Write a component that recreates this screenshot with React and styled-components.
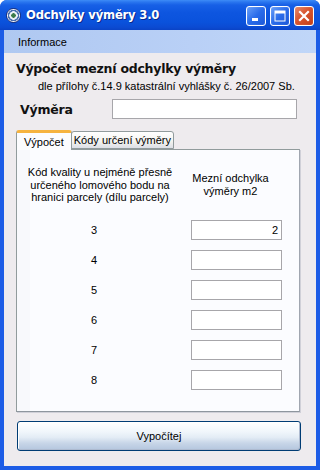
import React from "react";
import styled, { createGlobalStyle } from "styled-components";

const Global = createGlobalStyle`
  html, body { margin: 0; padding: 0; background: #ffffff; }
  body { width: 320px; height: 470px; overflow: hidden; }
  * { box-sizing: border-box; }
`;

const Window = styled.div`
  width: 320px;
  height: 470px;
  display: flex;
  flex-direction: column;
  border-radius: 7px 7px 0 0;
  overflow: hidden;
  background: #0b46d6;
  font-family: "Liberation Sans", Arial, sans-serif;
`;

const TitleBar = styled.div`
  height: 30px;
  flex: none;
  display: flex;
  align-items: center;
  padding: 0 6px 0 6px;
  background: linear-gradient(
    180deg,
    #3d8cf7 0px,
    #2a76ef 2px,
    #1760e6 5px,
    #0e56e0 12px,
    #0a52dc 22px,
    #0b4bd3 27px,
    #0a43c6 30px
  );
`;

const AppIcon = styled.div`
  width: 15px;
  height: 15px;
  border-radius: 50%;
  background: radial-gradient(circle at 50% 50%, #3c7a4a 0 2px, #e9eef5 2.5px 4px, #4a6fb0 4.5px 5.5px, #f4f6fa 6px);
  border: 1px solid #1b2f78;
  flex: none;
`;

const Title = styled.div`
  margin-left: 5px;
  color: #ffffff;
  font-family: "DejaVu Sans", sans-serif;
  font-weight: bold;
  font-size: 11.6px;
  letter-spacing: -0.2px;
  text-shadow: 1px 1px 0 #0a2a8c;
  flex: 1;
  white-space: nowrap;
`;

const Buttons = styled.div`
  display: flex;
  gap: 4px;
  padding-top: 2px;
`;

const CapButton = styled.div`
  width: 20px;
  height: 20px;
  border-radius: 3px;
  border: 1px solid #ffffff;
  display: flex;
  align-items: center;
  justify-content: center;
  background: ${(p) =>
    p.$close
      ? "linear-gradient(135deg, #e58a6c 0%, #d8552f 45%, #c23e18 100%)"
      : "linear-gradient(135deg, #6aa0f8 0%, #2a6cea 50%, #1c58d8 100%)"};
  box-shadow: inset 0 0 1px rgba(255,255,255,0.5);
`;

const Frame = styled.div`
  flex: 1;
  display: flex;
  flex-direction: column;
  border-left: 4px solid #1c5ce6;
  border-right: 4px solid #1c5ce6;
  border-bottom: 4px solid #1c5ce6;
  box-shadow: inset 1px 0 0 #4a8af5, inset -1px 0 0 #4a8af5, inset 0 -1px 0 #4a8af5;
  background: #eceaed;
`;

const MenuBar = styled.div`
  height: 23px;
  flex: none;
  display: flex;
  align-items: center;
  padding-left: 14px;
  font-size: 11px;
  color: #000;
  background: linear-gradient(90deg, #afc8f1 0%, #b9d0f6 60%, #c0d6f8 100%);
`;

const Client = styled.div`
  flex: 1;
  display: flex;
  flex-direction: column;
  padding: 8px 12px 0 12px;
  background: #eeebee;
`;

const Heading = styled.div`
  font-family: "DejaVu Sans", sans-serif;
  font-weight: bold;
  font-size: 12.5px;
  letter-spacing: -0.25px;
  color: #111;
  line-height: 16px;
`;

const Sub = styled.div`
  margin-top: 2px;
  padding-left: 22px;
  font-size: 11px;
  line-height: 14px;
  color: #000;
`;

const AreaRow = styled.div`
  margin-top: 6px;
  display: flex;
  align-items: center;
  height: 20px;
`;

const AreaLabel = styled.div`
  width: 96px;
  padding-left: 4px;
  font-family: "DejaVu Sans", sans-serif;
  font-weight: bold;
  font-size: 12.5px;
  letter-spacing: -0.2px;
  color: #111;
`;

const Input = styled.div`
  width: ${(p) => p.$w}px;
  height: 20px;
  background: #ffffff;
  border: 1px solid #a7a6aa;
  font-size: 11px;
  display: flex;
  align-items: center;
  justify-content: flex-end;
  padding-right: 3px;
  color: #000;
`;

const Tabs = styled.div`
  margin-top: 11px;
  display: flex;
  align-items: flex-end;
  height: 19px;
  position: relative;
  z-index: 1;
`;

const Tab = styled.div`
  height: ${(p) => (p.$active ? 20 : 18)}px;
  padding: 0 ${(p) => (p.$active ? 7 : 2)}px;
  margin-bottom: ${(p) => (p.$active ? -1 : 0)}px;
  display: flex;
  align-items: center;
  font-size: 11px;
  color: #000;
  white-space: nowrap;
  border: 1px solid #919b9c;
  border-bottom: ${(p) => (p.$active ? "none" : "1px solid #919b9c")};
  border-top: ${(p) => (p.$active ? "3px solid #f6b33f" : "1px solid #919b9c")};
  border-radius: 3px 3px 0 0;
  background: ${(p) =>
    p.$active ? "#fcfcfe" : "linear-gradient(180deg, #ffffff 0%, #f3f3ef 60%, #dcdfe6 100%)"};
  margin-left: ${(p) => (p.$active ? 0 : -1)}px;
`;

const Panel = styled.div`
  width: 284px;
  height: 263px;
  border: 1px solid #919b9c;
  border-right-color: #a0a6b0;
  border-bottom-color: #8e969e;
  background: #f8f9fc;
  box-shadow: 1px 1px 0 #d0d0d8;
  padding: 0 0 0 13px;
`;

const Inner = styled.div`
  width: 269px;
  height: 100%;
  background: #fbfcff;
  display: grid;
  grid-template-columns: 157px 112px;
  grid-template-rows: 70px repeat(6, 30px);
  align-items: start;
`;

const Head = styled.div`
  display: flex;
  flex-direction: column;
  align-items: center;
  white-space: nowrap;
  font-size: 11px;
  line-height: 12.5px;
  color: #000;
  padding-top: ${(p) => p.$top}px;
  padding-right: ${(p) => p.$right}px;
`;

const Code = styled.div`
  height: 20px;
  display: flex;
  align-items: center;
  padding-left: 61px;
  font-size: 11px;
  color: #000;
`;

const Cell = styled.div`
  padding-left: 4px;
`;

const Footer = styled.div`
  padding-top: 9px;
`;

const CalcButton = styled.div`
  width: 284px;
  height: 30px;
  margin-left: 1px;
  border: 1px solid #003c74;
  border-radius: 3px;
  display: flex;
  align-items: center;
  justify-content: center;
  font-size: 11px;
  color: #000;
  background: linear-gradient(
    180deg,
    #ffffff 0%,
    #f0f6fb 35%,
    #e3ecf5 55%,
    #c8d6e8 75%,
    #b4c6de 100%
  );
  box-shadow: inset 1px 1px 0 #ffffff, inset -1px -1px 0 #aebbd0;
`;

const rows = [
  { code: "3", value: "2" },
  { code: "4", value: "" },
  { code: "5", value: "" },
  { code: "6", value: "" },
  { code: "7", value: "" },
  { code: "8", value: "" },
];

export default function App() {
  return (
    <>
      <Global />
      <Window>
        <TitleBar>
          <AppIcon />
          <Title>Odchylky výměry 3.0</Title>
          <Buttons>
            <CapButton>
              <svg width="12" height="12" viewBox="0 0 12 12">
                <rect x="2" y="8" width="6" height="3" fill="#fff" />
              </svg>
            </CapButton>
            <CapButton>
              <svg width="12" height="12" viewBox="0 0 12 12">
                <rect x="1" y="1" width="10" height="10" fill="none" stroke="#fff" strokeWidth="1" />
                <rect x="1" y="1" width="10" height="2.5" fill="#fff" />
              </svg>
            </CapButton>
            <CapButton $close>
              <svg width="12" height="12" viewBox="0 0 12 12">
                <path d="M2 2 L10 10 M10 2 L2 10" stroke="#fff" strokeWidth="2.2" strokeLinecap="square" />
              </svg>
            </CapButton>
          </Buttons>
        </TitleBar>
        <Frame>
          <MenuBar>Informace</MenuBar>
          <Client>
            <Heading>Výpočet mezní odchylky výměry</Heading>
            <Sub>dle přílohy č.14.9 katastrální vyhlášky č. 26/2007 Sb.</Sub>
            <AreaRow>
              <AreaLabel>Výměra</AreaLabel>
              <Input $w={185} />
            </AreaRow>
            <Tabs>
              <Tab $active>Výpočet</Tab>
              <Tab>Kódy určení výměry</Tab>
            </Tabs>
            <Panel>
              <Inner>
                <Head $top={16} $right={17}>
                  <span>Kód kvality u nejméně přesně</span>
                  <span>určeného lomového bodu na</span>
                  <span>hranici parcely (dílu parcely)</span>
                </Head>
                <Head $top={22} $right={25}>
                  <span>Mezní odchylka</span>
                  <span>výměry m2</span>
                </Head>
                {rows.map((r) => (
                  <React.Fragment key={r.code}>
                    <Code>{r.code}</Code>
                    <Cell>
                      <Input $w={91}>{r.value}</Input>
                    </Cell>
                  </React.Fragment>
                ))}
              </Inner>
            </Panel>
            <Footer>
              <CalcButton>Vypočítej</CalcButton>
            </Footer>
          </Client>
        </Frame>
      </Window>
    </>
  );
}
